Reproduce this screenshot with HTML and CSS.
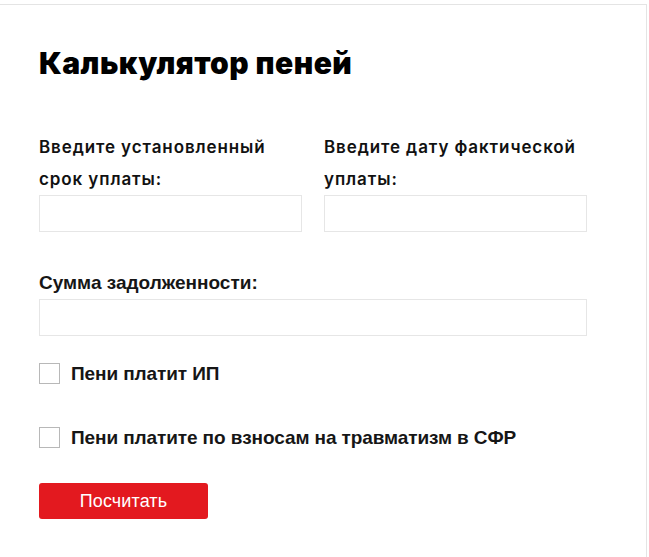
FILE: index.html
```html
<!DOCTYPE html>
<html lang="ru">
<head>
<meta charset="utf-8">
<title>Калькулятор пеней</title>
<link rel="stylesheet" href="styles.css">
</head>
<body>
<div class="card">
  <h1 class="title">Калькулятор пеней</h1>
  <div class="dates">
    <div class="field">
      <label class="label">Введите установленный срок уплаты:</label>
      <input class="input" type="text">
    </div>
    <div class="field">
      <label class="label">Введите дату фактической уплаты:</label>
      <input class="input" type="text">
    </div>
  </div>
  <div class="field sum">
    <label class="label label-alt">Сумма задолженности:</label>
    <input class="input input-wide" type="text">
  </div>
  <label class="check first">
    <span class="box"></span>
    <span class="check-text">Пени платит ИП</span>
  </label>
  <label class="check second">
    <span class="box"></span>
    <span class="check-text">Пени платите по взносам на травматизм в СФР</span>
  </label>
  <button class="btn" type="button">Посчитать</button>
</div>
</body>
</html>
```
FILE: styles.css
```css
html, body {
  margin: 0;
  padding: 0;
  background: #fff;
}
.card {
  box-sizing: border-box;
  width: 647px;
  height: 553px;
  margin-top: 4px;
  border-top: 1px solid #e4e4e4;
  border-right: 1px solid #e4e4e4;
  padding: 40px 0 0 39px;
  color: #111;
}
.title {
  margin: 0;
  font-family: Inter, "Noto Sans", sans-serif;
  font-weight: 900;
  font-size: 30px;
  line-height: 36px;
  letter-spacing: 0.45px;
  color: #000;
}
.dates {
  display: grid;
  grid-template-columns: 263px 263px;
  column-gap: 22px;
  margin-top: 50px;
}
.field {
  display: flex;
  flex-direction: column;
}
.label {
  font-family: Inter, "Noto Sans", sans-serif;
  font-weight: 600;
  font-size: 17px;
  line-height: 32px;
  letter-spacing: 0.9px;
  color: #111;
}
.label-alt {
  font-family: "Liberation Sans", Arial, sans-serif;
  font-weight: 700;
  font-size: 19px;
  letter-spacing: 0;
  color: #161616;
}
.input {
  box-sizing: border-box;
  width: 263px;
  height: 37px;
  margin: 0;
  border: 1px solid #e6e6e6;
  border-radius: 0;
  background: #fff;
  outline: none;
}
.sum {
  margin-top: 35px;
}
.input-wide {
  width: 548px;
}
.check {
  display: flex;
  align-items: center;
  gap: 11px;
  height: 21px;
}
.check.first {
  margin-top: 27px;
}
.check.second {
  margin-top: 43px;
}
.box {
  box-sizing: border-box;
  width: 21px;
  height: 21px;
  border: 1px solid #b8b8b8;
  background: #fff;
}
.check-text {
  font-family: "Liberation Sans", Arial, sans-serif;
  font-weight: 700;
  font-size: 19px;
  letter-spacing: -0.1px;
  color: #161616;
}
.btn {
  display: block;
  margin-top: 35px;
  width: 169px;
  height: 36px;
  border: none;
  border-radius: 3px;
  background: #e3191f;
  color: #fff;
  font-family: "Liberation Sans", Arial, sans-serif;
  font-size: 18px;
  letter-spacing: 0.1px;
  padding: 0;
}
```
